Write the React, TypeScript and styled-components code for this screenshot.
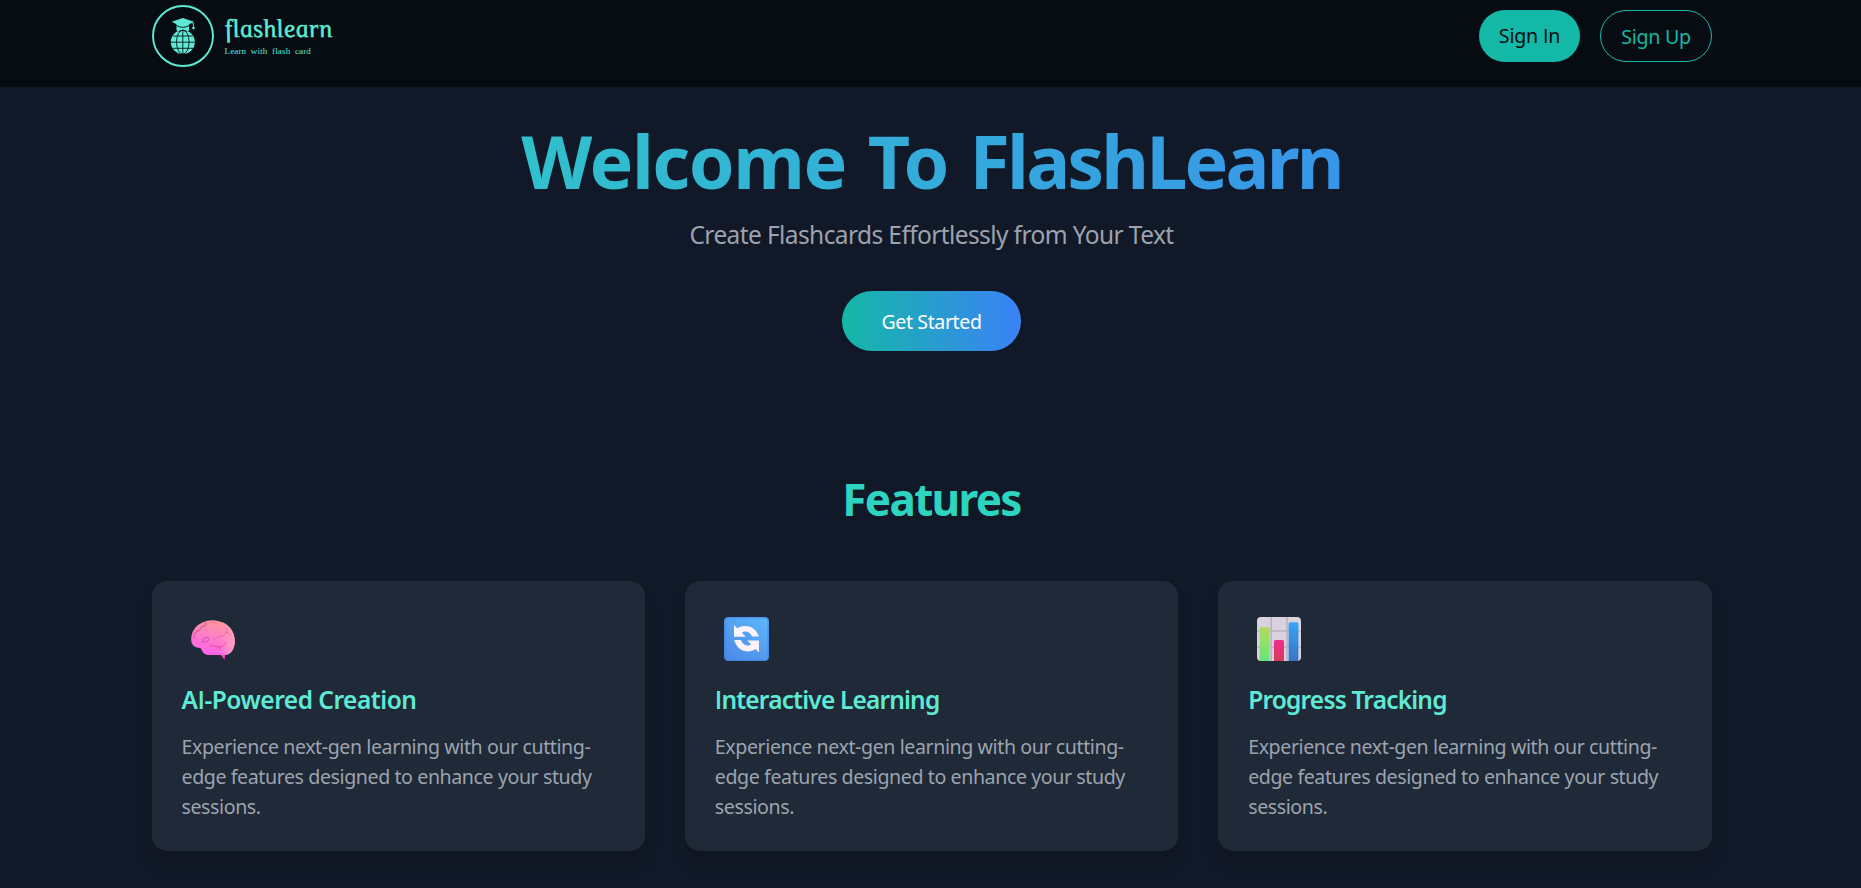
import React from 'react';
import styled, { createGlobalStyle } from 'styled-components';

const GlobalStyle = createGlobalStyle`
  *, *::before, *::after { box-sizing: border-box; }
  html, body { margin: 0; padding: 0; }
  body {
    height: 100vh;
    overflow: hidden;
    background: #111827;
    color: #fff;
    font-family: "Noto Sans", "Open Sans", sans-serif;
  }
  h1, h2, h3, p { margin: 0; }
`;

const Header = styled.header`
  height: 87px;
  background: #070c12;
  padding: 5px 0 0 152px;
`;

const HeaderRow = styled.div`
  width: 1560px;
  display: flex;
  justify-content: space-between;
  align-items: flex-start;
`;

const Brand = styled.div`
  display: flex;
  gap: 10.5px;
  color: #5eead4;
`;

const BrandText = styled.div`
  display: flex;
  flex-direction: column;
  padding-top: 9px;
  font-family: "Liberation Serif", serif;
`;

const BrandName = styled.span`
  padding-left: 1px;
  font-size: 25.5px;
  line-height: 30px;
  font-style: italic;
  letter-spacing: 0.4px;
  -webkit-text-stroke: 0.5px currentColor;
  transform: skewX(11deg);
  transform-origin: 0 22px;
`;

const Tagline = styled.span`
  font-size: 9px;
  line-height: 14px;
  letter-spacing: 0.15px;
  word-spacing: 2.2px;
`;

const Actions = styled.div`
  display: flex;
  gap: 20px;
  padding-top: 5px;
`;

const PillButton = styled.button<{ $outline?: boolean }>`
  height: 52px;
  width: ${p => (p.$outline ? 112 : 101)}px;
  padding: ${p => (p.$outline ? '10px 0 8px' : '9px 0')};
  border-radius: 26px;
  border: ${p => (p.$outline ? '1px solid #14b8a6' : '0')};
  background: ${p => (p.$outline ? 'transparent' : '#14b8a6')};
  color: ${p => (p.$outline ? '#14b8a6' : '#060b11')};
  font-family: inherit;
  font-size: 19.6px;
  line-height: 30px;
  letter-spacing: ${p => (p.$outline ? -0.25 : -0.2)}px;
`;

const Page = styled.main`
  width: 1560px;
  margin-left: 151.5px;
`;

const Hero = styled.section`
  display: flex;
  flex-direction: column;
  align-items: center;
  padding-top: 34px;
`;

const HeroTitle = styled.h1`
  width: 100%;
  text-align: center;
  font-size: 73.5px;
  font-weight: 700;
  line-height: 80px;
  letter-spacing: -1.45px;
  word-spacing: 4px;
  background: linear-gradient(to right, #2dd4bf, #3b82f6);
  background-clip: text;
  -webkit-background-clip: text;
  color: transparent;
`;

const TightWord = styled.span`
  letter-spacing: -2.85px;
`;

const HeroSubtitle = styled.p`
  margin-top: 15px;
  margin-bottom: 38px;
  font-size: 24.5px;
  line-height: 37px;
  letter-spacing: -0.6px;
  color: #9ca3af;
`;

const StartButton = styled.button`
  width: 179px;
  height: 60px;
  padding: 1px 0 0;
  border: 0;
  border-radius: 30px;
  background: linear-gradient(to right, #14b8a6, #3b82f6);
  color: #fff;
  font-family: inherit;
  font-size: 19.6px;
  line-height: 30px;
  letter-spacing: -0.4px;
`;

const Features = styled.section`
  padding-top: 121px;
`;

const SectionTitle = styled.h2`
  text-align: center;
  font-size: 44.1px;
  font-weight: 700;
  line-height: 54px;
  letter-spacing: -1.7px;
  margin-bottom: 55px;
  color: #2dd4bf;
`;

const CardGrid = styled.div`
  display: grid;
  grid-template-columns: repeat(3, 1fr);
  gap: 40px;
`;

const Card = styled.article`
  height: 270px;
  padding: 30px;
  border-radius: 15px;
  background: #1f2937;
  box-shadow: 0 12.5px 19px -4px rgba(0, 0, 0, 0.1), 0 5px 7.5px -5px rgba(0, 0, 0, 0.1);
`;

const CardIcon = styled.div`
  height: 70px;
  padding: 6px 0 0 9px;
  svg { display: block; }
`;

const CardTitle = styled.h3<{ $tracking: number }>`
  font-size: 24.5px;
  font-weight: 600;
  line-height: 37px;
  margin-bottom: 14px;
  letter-spacing: ${p => p.$tracking}px;
  color: #5eead4;
`;

const CardText = styled.p`
  font-size: 19.6px;
  line-height: 30px;
  letter-spacing: -0.41px;
  color: #9ca3af;
`;

/* Capital I without slab serifs */
const PlainI = styled.span`
  font-family: "Open Sans", sans-serif;
  line-height: 1;
`;

const Label = ({ text }: { text: string }) => (
  <>
    {text.split(/(I)/).map((part, i) => (part === 'I' ? <PlainI key={i}>I</PlainI> : part))}
  </>
);

const LogoMark = () => (
  <svg width="62" height="62" viewBox="0 0 62 62" fill="none">
    <circle cx="31" cy="31" r="30" stroke="#5eead4" strokeWidth="1.9" />
    <path d="M24.5 17.5h12.6v8l-3 1.5h-6.6l-3-1.5z" fill="#5eead4" />
    <circle cx="30.8" cy="37.1" r="12" fill="#5eead4" />
    <path d="M24.4 20.6q6.4 3.4 12.8 0M26.5 26.4q4.3-2.6 8.6 0" stroke="#060b11" strokeWidth=".9" />
    <path d="M19.7 16.8 30.8 12.9l11.2 3.9-5 2.5q-6.2-1.6-12.4 0z" fill="#5eead4" />
    <path d="M24.6 19.2q6.2 4 12.4 0" fill="#5eead4" />
    <path d="M30.8 16.6 41.4 18v4.4" stroke="#5eead4" strokeWidth=".9" />
    <path d="M40.6 21.8h1.8l.6 1.6-1.5 1.2-1.4-1.2z" fill="#5eead4" />
    <g stroke="#060b11" strokeWidth=".85">
      <path d="M30.8 25v24.2M18.8 37.2h24M20.6 31h20.4M20.6 43.3h20.4" />
      <ellipse cx="30.8" cy="37.1" rx="6.3" ry="12" />
    </g>
  </svg>
);

const BrainIcon = () => (
  <svg width="44" height="44" viewBox="0 0 44 44" fill="none">
    <defs>
      <linearGradient id="brain" x1="26" y1="3" x2="18" y2="38" gradientUnits="userSpaceOnUse">
        <stop stopColor="#ff9a98" />
        <stop offset=".45" stopColor="#fd7fc6" />
        <stop offset="1" stopColor="#ff62ea" />
      </linearGradient>
      <linearGradient id="brainEdge" x1="28" y1="20" x2="44" y2="20" gradientUnits="userSpaceOnUse">
        <stop stopColor="#ff9fc0" stopOpacity="0" />
        <stop offset="1" stopColor="#ff9fc0" />
      </linearGradient>
    </defs>
    <path d="M28 36l5.6 6.7 1-7.7z" fill="#ff3fc4" />
    <path d="M9.5 31C4 31 .2 28 .2 23 0 14 5 8.2 12 5.2 18 2.2 26 2.6 32 5.6c7 3 11.8 10.4 11.8 18.4 0 8-4 14-10 14H18c-4.5 0-6.5-2.5-8.5-7z" fill="url(#brain)" />
    <path d="M9.5 31C4 31 .2 28 .2 23 0 14 5 8.2 12 5.2 18 2.2 26 2.6 32 5.6c7 3 11.8 10.4 11.8 18.4 0 8-4 14-10 14H18c-4.5 0-6.5-2.5-8.5-7z" fill="url(#brainEdge)" />
    <g strokeLinecap="round" strokeLinejoin="round" strokeOpacity=".75">
      <path d="M3 21c0-6 4-8 6-8 0-3 3-4 5-4 1-2 1-3 0-4" stroke="#c95f86" strokeWidth="1.4" />
      <path d="M11 26c0-4 3-6 6-5.5M12 24c2 1.5 5 1 6-2" stroke="#cf4fae" strokeWidth="1.3" />
      <path d="M18 6c2-1.5 5-1.5 7 0M36 11c1 4-1 7-5 8-4 0-6 3-8 3M34 15c3 0 5 2 6 4" stroke="#e5668e" strokeWidth="1" />
      <path d="M19 29c4-1 6 1 9 1s6-1 7-5M28 30c0 2 1 2 2 3" stroke="#e0408f" strokeWidth="1" />
    </g>
  </svg>
);

const RefreshIcon = () => (
  <svg width="45" height="44" viewBox="0 0 45 44" fill="none">
    <defs>
      <linearGradient id="tile" x1="40" y1="0" x2="8" y2="44" gradientUnits="userSpaceOnUse">
        <stop stopColor="#5db4fa" />
        <stop offset="1" stopColor="#4a8ce8" />
      </linearGradient>
    </defs>
    <rect width="45" height="44" rx="4.5" fill="url(#tile)" />
    <rect x=".8" y=".8" width="43.4" height="42.4" rx="4" stroke="#3f82df" strokeOpacity=".55" strokeWidth="1.6" />
    <path d="M10 8l3.3 3.2C20 7 31.500 8.200 34.800 19.500h-6.600c-2.400-5.200-7.500-6-10.400-3.700l4 4H10z" fill="#faf2fd" />
    <path d="M35 35.4l-3.4-3.3C25 36.600 13.500 35 10.200 23h6.600c2.400 5.600 7.500 6.700 10.400 4.400l-4-3.900H35z" fill="#faf2fd" />
  </svg>
);

const ChartIcon = () => (
  <svg width="44" height="44" viewBox="0 0 44 44" fill="none">
    <defs>
      <linearGradient id="green" x1="0" y1="10" x2="0" y2="44" gradientUnits="userSpaceOnUse">
        <stop stopColor="#b3db58" />
        <stop offset="1" stopColor="#62e77a" />
      </linearGradient>
      <linearGradient id="red" x1="0" y1="23" x2="0" y2="44" gradientUnits="userSpaceOnUse">
        <stop stopColor="#ee2f8c" />
        <stop offset="1" stopColor="#d83a5c" />
      </linearGradient>
      <linearGradient id="blue" x1="0" y1="5" x2="0" y2="44" gradientUnits="userSpaceOnUse">
        <stop stopColor="#36a6f5" />
        <stop offset="1" stopColor="#3a72c4" />
      </linearGradient>
      <clipPath id="chartClip"><rect width="44" height="44" rx="4" /></clipPath>
    </defs>
    <g clipPath="url(#chartClip)">
      <rect width="44" height="44" fill="#dad2df" />
      <path d="M14.3 0v44M30 0v44M0 14h44M0 30h44" stroke="#b9b2c0" strokeWidth="1.6" />
      <rect x="2.6" y="10.3" width="10" height="36" rx="1.5" fill="url(#green)" />
      <rect x="17" y="23" width="10" height="24" rx="1.5" fill="url(#red)" />
      <rect x="31.6" y="5.3" width="9.8" height="41" rx="1.5" fill="url(#blue)" />
    </g>
  </svg>
);

const features = [
  { title: 'AI-Powered Creation', tracking: -0.5, Icon: BrainIcon },
  { title: 'Interactive Learning', tracking: -0.84, Icon: RefreshIcon },
  { title: 'Progress Tracking', tracking: -0.82, Icon: ChartIcon },
];

export default function App() {
  return (
    <>
      <GlobalStyle />
      <Header>
        <HeaderRow>
          <Brand>
            <LogoMark />
            <BrandText>
              <BrandName>flashlearn</BrandName>
              <Tagline>Learn with flash card</Tagline>
            </BrandText>
          </Brand>
          <Actions>
            <PillButton><Label text="Sign In" /></PillButton>
            <PillButton $outline>Sign Up</PillButton>
          </Actions>
        </HeaderRow>
      </Header>
      <Page>
        <Hero>
          <HeroTitle>Welcome To <TightWord>FlashLearn</TightWord></HeroTitle>
          <HeroSubtitle>Create Flashcards Effortlessly from Your Text</HeroSubtitle>
          <StartButton>Get Started</StartButton>
        </Hero>
        <Features>
          <SectionTitle>Features</SectionTitle>
          <CardGrid>
            {features.map(({ title, tracking, Icon }) => (
              <Card key={title}>
                <CardIcon><Icon /></CardIcon>
                <CardTitle $tracking={tracking}><Label text={title} /></CardTitle>
                <CardText>
                  Experience next-gen learning with our cutting-edge features designed to enhance your study sessions.
                </CardText>
              </Card>
            ))}
          </CardGrid>
        </Features>
      </Page>
    </>
  );
}
